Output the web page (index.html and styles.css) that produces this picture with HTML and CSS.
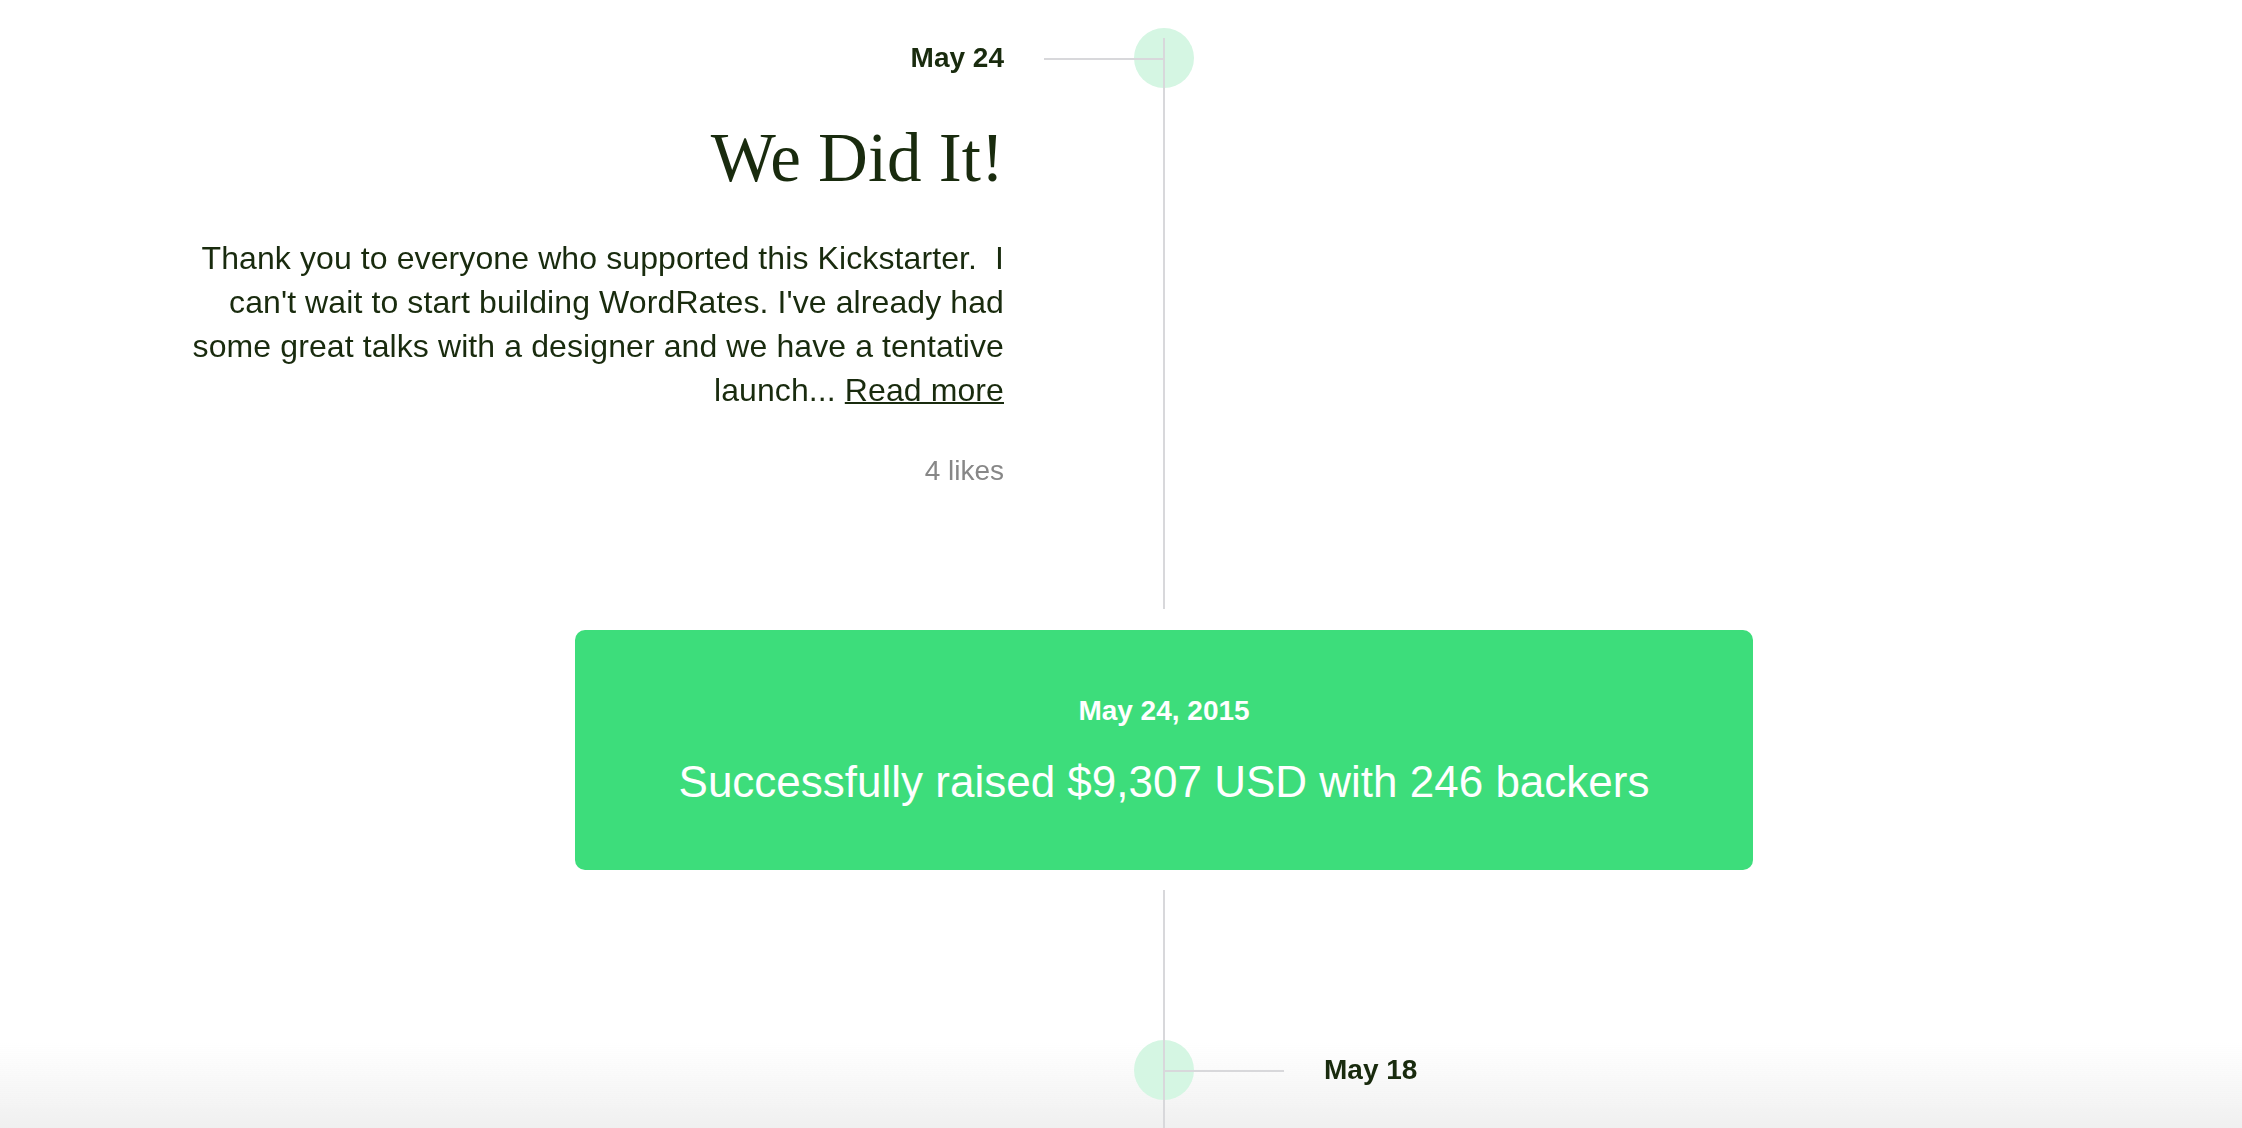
FILE: index.html
```html
<!DOCTYPE html>
<html lang="en">
<head>
  <meta charset="UTF-8" />
  <meta name="viewport" content="width=device-width, initial-scale=1.0" />
  <title>WordRates - Updates</title>
  <link rel="stylesheet" href="styles.css">
</head>
<body>
  <main class="feed">
    <article class="entry entry-left entry-first">
      <div class="entry-body">
        <p class="entry-date">May 24</p>
        <h2 class="entry-title">We Did It!</h2>
        <p class="entry-text">Thank you to everyone who supported this Kickstarter.&nbsp; I can't wait to start building WordRates. I've already had some great talks with a designer and we have a tentative launch... <a href="#">Read more</a></p>
        <p class="entry-likes">4 likes</p>
      </div>
      <div class="entry-axis"><span class="marker"></span></div>
      <div class="entry-side"></div>
    </article>

    <section class="milestone">
      <p class="milestone-date">May 24, 2015</p>
      <p class="milestone-text">Successfully raised $9,307 USD with 246 backers</p>
    </section>

    <article class="entry entry-right">
      <div class="entry-side"></div>
      <div class="entry-axis"><span class="marker"></span></div>
      <div class="entry-body">
        <p class="entry-date">May 18</p>
      </div>
    </article>
  </main>

  <!-- soft grey fade behind the bottom of the feed -->
  <div class="fade"></div>
</body>
</html>
```

FILE: styles.css
```css
html {
  background-color: #fff;
}

body {
  margin: 0;
  color: #192b0e;
  font-family: "Liberation Sans", Arial, sans-serif;
}

p,
h2 {
  margin: 0;
}

.feed {
  display: flex;
  flex-direction: column;
  align-items: center;
  padding-left: 86px;
}

.entry {
  position: relative;
  display: grid;
  grid-template-columns: 830px 320px 830px;
}

/* the timeline line, drawn over the markers */
.entry::after {
  content: "";
  position: absolute;
  top: 0;
  bottom: 0;
  left: 50%;
  width: 2px;
  margin-left: -1px;
  background-color: #d8d8db;
}

.entry-first::after {
  top: 38px;
}

.entry-left {
  padding: 38px 0 118px;
}

.entry-right {
  padding: 160px 0 38px;
}

.entry-left .entry-body {
  text-align: right;
}

.entry-right .entry-body {
  text-align: left;
}

.entry-date {
  font-size: 28px;
  line-height: 40px;
  font-weight: bold;
}

.entry-title {
  margin-top: 40px;
  font-family: "Liberation Serif", "Times New Roman", serif;
  font-size: 69px;
  line-height: 80px;
  font-weight: normal;
}

.entry-text {
  margin-top: 38px;
  font-size: 32px;
  line-height: 44px;
  letter-spacing: 0.1px;
}

.entry-text a {
  color: inherit;
  text-decoration: underline;
  text-decoration-thickness: 2px;
}

.entry-likes {
  margin-top: 39px;
  font-size: 28px;
  line-height: 40px;
  color: #878787;
}

.marker {
  position: relative;
  display: block;
  height: 40px;
}

.marker::before {
  content: "";
  position: absolute;
  top: -10px;
  left: 130px;
  width: 60px;
  height: 60px;
  border-radius: 50%;
  background-color: #d5f6e3;
}

.marker::after {
  content: "";
  position: absolute;
  top: 20px;
  width: 120px;
  height: 2px;
  background-color: #d8d8db;
}

.entry-left .marker::after {
  left: 40px;
}

.entry-right .marker::after {
  left: 160px;
}

.milestone {
  box-sizing: border-box;
  width: 1178px;
  margin: 21px 0 20px;
  padding: 61px 40px 60px;
  border-radius: 10px;
  background-color: #3ddd7b;
  color: #fff;
  text-align: center;
}

.milestone-date {
  font-size: 28px;
  line-height: 40px;
  font-weight: bold;
}

.milestone-text {
  margin-top: 23px;
  font-size: 44px;
  line-height: 56px;
}

.fade {
  position: fixed;
  left: 0;
  right: 0;
  bottom: 0;
  z-index: -1;
  height: 85px;
  background: linear-gradient(rgba(240, 240, 240, 0), #f0f0f0);
  pointer-events: none;
}
```
